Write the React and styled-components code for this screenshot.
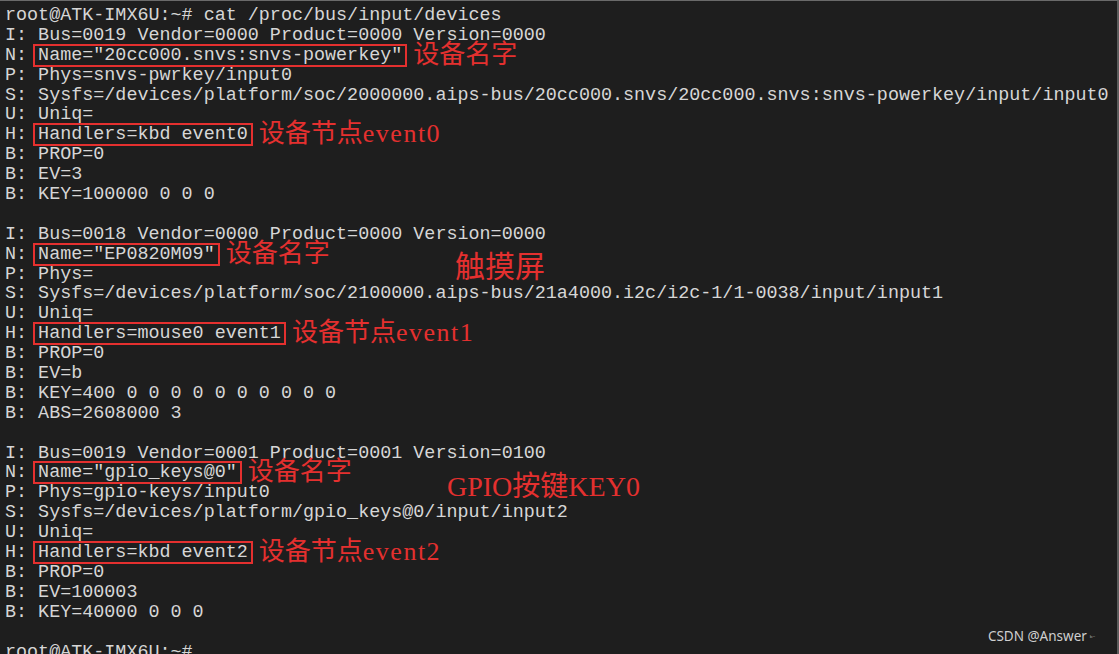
import React from 'react';
import styled, { createGlobalStyle } from 'styled-components';

const GlobalStyle = createGlobalStyle`
    html, body {
        margin: 0;
        padding: 0;
        background: #1e1e1e;
    }
`;

const Terminal = styled.div`
    position: relative;
    box-sizing: border-box;
    width: 1119px;
    height: 654px;
    overflow: hidden;
    padding: 5px 0 0 5px;
    background: #1e1e1e;
    border-top: 1px solid #6a6a6a;
    border-right: 2px solid #5c5c5c;
    font-family: "Liberation Mono", "Courier New", monospace;
    font-size: 18.4px;
    line-height: 19.9px;
    color: #d6d6d6;
`;

const Line = styled.div`
    white-space: pre;
    height: 19.9px;
`;

const Boxed = styled.span`
    display: inline-block;
    line-height: 19px;
    margin: -2px ${(p) => p.gap}px -2px -5px;
    padding: 0 3px 0 3px;
    border: 2px solid #e4302f;
`;

const Note = styled.span`
    font-family: "Liberation Serif", "Noto Sans CJK SC", serif;
    font-size: ${(p) => p.size}px;
    line-height: 0;
    vertical-align: middle;
    color: #e4302f;
`;

// the latin part of a note is set wider, like the half-width glyphs of the original
const Latin = styled.span`
    letter-spacing: 1.5px;
`;

const FloatNote = styled.div`
    position: absolute;
    left: ${(p) => p.x}px;
    top: ${(p) => p.y}px;
    font-family: "Liberation Serif", "Noto Sans CJK SC", serif;
    font-size: ${(p) => p.size}px;
    line-height: 1;
    color: #e4302f;
    white-space: nowrap;
`;

const Watermark = styled.div`
    position: absolute;
    right: 22px;
    bottom: 6px;
    display: flex;
    align-items: flex-start;
    gap: 3px;
    font-family: "Noto Sans", "Liberation Sans", sans-serif;
    font-size: 13.5px;
    color: #cfcfcf;
    span {
        font-size: 7px;
        margin-top: 1px;
        color: #a8a8a8;
    }
`;

const lines = [
    { text: 'root@ATK-IMX6U:~# cat /proc/bus/input/devices' },
    { text: 'I: Bus=0019 Vendor=0000 Product=0000 Version=0000' },
    { text: 'N: ', box: 'Name="20cc000.snvs:snvs-powerkey"', note: '设备名字' },
    { text: 'P: Phys=snvs-pwrkey/input0' },
    { text: 'S: Sysfs=/devices/platform/soc/2000000.aips-bus/20cc000.snvs/20cc000.snvs:snvs-powerkey/input/input0' },
    { text: 'U: Uniq=' },
    { text: 'H: ', box: 'Handlers=kbd event0', note: '设备节点', tag: 'event0' },
    { text: 'B: PROP=0' },
    { text: 'B: EV=3' },
    { text: 'B: KEY=100000 0 0 0' },
    { text: '' },
    { text: 'I: Bus=0018 Vendor=0000 Product=0000 Version=0000' },
    { text: 'N: ', box: 'Name="EP0820M09"', note: '设备名字' },
    { text: 'P: Phys=' },
    { text: 'S: Sysfs=/devices/platform/soc/2100000.aips-bus/21a4000.i2c/i2c-1/1-0038/input/input1' },
    { text: 'U: Uniq=' },
    { text: 'H: ', box: 'Handlers=mouse0 event1', note: '设备节点', tag: 'event1' },
    { text: 'B: PROP=0' },
    { text: 'B: EV=b' },
    { text: 'B: KEY=400 0 0 0 0 0 0 0 0 0 0' },
    { text: 'B: ABS=2608000 3' },
    { text: '' },
    { text: 'I: Bus=0019 Vendor=0001 Product=0001 Version=0100' },
    { text: 'N: ', box: 'Name="gpio_keys@0"', note: '设备名字' },
    { text: 'P: Phys=gpio-keys/input0' },
    { text: 'S: Sysfs=/devices/platform/gpio_keys@0/input/input2' },
    { text: 'U: Uniq=' },
    { text: 'H: ', box: 'Handlers=kbd event2', note: '设备节点', tag: 'event2' },
    { text: 'B: PROP=0' },
    { text: 'B: EV=100003' },
    { text: 'B: KEY=40000 0 0 0' },
    { text: '' },
    { text: 'root@ATK-IMX6U:~#' },
];

const App = () => {
    return (
        <>
            <GlobalStyle />
            <Terminal>
                {lines.map((item, i) => (
                    <Line key={i}>
                        {item.text}
                        {item.box && <Boxed gap={6}>{item.box}</Boxed>}
                        {item.note && (
                            <Note size={26}>
                                {item.note}
                                {item.tag && <Latin>{item.tag}</Latin>}
                            </Note>
                        )}
                    </Line>
                ))}
                <FloatNote x={455} y={251} size={30}>触摸屏</FloatNote>
                <FloatNote x={447} y={472} size={28}>GPIO按键KEY0</FloatNote>
                <Watermark>
                    CSDN @Answer<span>ᵇ⁻</span>
                </Watermark>
            </Terminal>
        </>
    );
};

export default App;
